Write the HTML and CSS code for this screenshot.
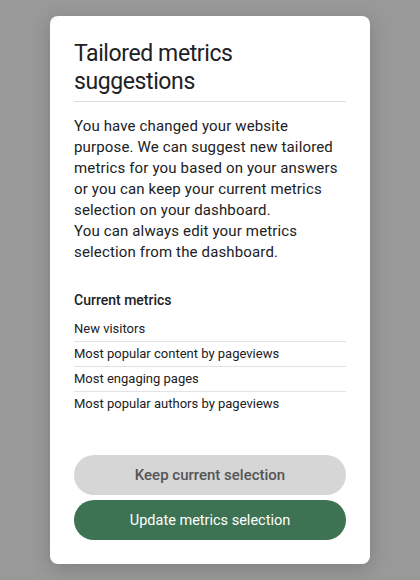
FILE: index.html
```html
<!DOCTYPE html>
<html lang="en">
<head>
<meta charset="utf-8">
<title>Tailored metrics suggestions</title>
<link rel="stylesheet" href="styles.css">
</head>
<body>
<div class="backdrop">
  <div class="dialog" role="dialog">
    <h1 class="title">Tailored metrics suggestions</h1>
    <div class="divider"></div>
    <p class="body">You have changed your website purpose. We can suggest new tailored metrics for you based on your answers or you can keep your current metrics selection on your dashboard.<br>You can always edit your metrics selection from the dashboard.</p>
    <h2 class="subtitle">Current metrics</h2>
    <ul class="metrics">
      <li>New visitors</li>
      <li>Most popular content by pageviews</li>
      <li>Most engaging pages</li>
      <li>Most popular authors by pageviews</li>
    </ul>
    <div class="actions">
      <button class="btn btn-secondary">Keep current selection</button>
      <button class="btn btn-primary">Update metrics selection</button>
    </div>
  </div>
</div>
</body>
</html>
```

FILE: styles.css
```css
html, body {
  margin: 0;
  padding: 0;
  height: 100%;
}
body {
  background: #999999;
  font-family: Roboto, "Liberation Sans", sans-serif;
  color: #202124;
}
.backdrop {
  min-height: 100vh;
  display: flex;
  align-items: center;
  justify-content: center;
}
.dialog {
  width: 320px;
  box-sizing: border-box;
  padding: 24px 24px 24px;
  background: #ffffff;
  border-radius: 8px;
  box-shadow: 0 4px 20px rgba(0, 0, 0, 0.18);
}
.title {
  margin: 0;
  font-size: 23px;
  line-height: 28px;
  letter-spacing: -0.4px;
  font-weight: 400;
  color: #202124;
  padding-bottom: 5px;
}
.divider {
  height: 1px;
  background: #dadce0;
}
.body {
  margin: 14px 0 0;
  font-size: 15px;
  line-height: 21px;
  letter-spacing: 0.15px;
  color: #202124;
}
.subtitle {
  margin: 27px 0 0;
  font-size: 14px;
  line-height: 20px;
  font-weight: 500;
  color: #202124;
}
.metrics {
  list-style: none;
  margin: 7px 0 0;
  padding: 0;
}
.metrics li {
  font-size: 13px;
  line-height: 16px;
  padding: 4px 0;
  color: #202124;
  border-bottom: 1px solid #e3e3e3;
}
.metrics li:last-child {
  border-bottom: none;
}
.actions {
  margin-top: 39px;
  display: flex;
  flex-direction: column;
  gap: 5px;
}
.btn {
  height: 40px;
  border: none;
  border-radius: 20px;
  font-family: Roboto, "Liberation Sans", sans-serif;
  font-size: 15px;
  cursor: pointer;
}
.btn-secondary {
  background: #d6d6d6;
  color: #555555;
  font-weight: 500;
}
.btn-primary {
  background: #3d7352;
  color: #ffffff;
  font-weight: 400;
  font-size: 14.5px;
}
```
